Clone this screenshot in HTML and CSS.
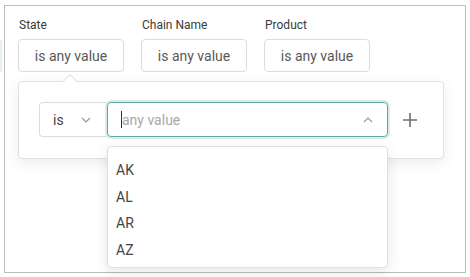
FILE: index.html
```html
<!DOCTYPE html>
<html lang="en">

<head>
    <meta charset="UTF-8">
    <title>Filters</title>
    <link rel="stylesheet" href="styles.css">
</head>

<body>
    <div class="edge"></div>
    <div class="frame">
        <div class="filters">
            <div class="filter">
                <label>State</label>
                <button class="filter-button">is any value</button>
            </div>
            <div class="filter">
                <label>Chain Name</label>
                <button class="filter-button">is any value</button>
            </div>
            <div class="filter">
                <label>Product</label>
                <button class="filter-button">is any value</button>
            </div>
        </div>

        <div class="popover">
            <div class="popover-arrow"></div>
            <div class="condition">
                <div class="operator">
                    <span>is</span>
                    <svg width="10" height="6" viewBox="0 0 10 6"><path d="M1 1l4 4 4-4" fill="none" stroke="#999" stroke-width="1.2"/></svg>
                </div>
                <div class="value-input">
                    <span class="caret"></span>
                    <span class="placeholder">any value</span>
                    <svg class="chevron" width="10" height="6" viewBox="0 0 10 6"><path d="M1 5l4-4 4 4" fill="none" stroke="#999" stroke-width="1.2"/></svg>
                </div>
                <svg class="add" width="14" height="14" viewBox="0 0 14 14"><path d="M7 0v14M0 7h14" stroke="#6b7079" stroke-width="1.6"/></svg>
            </div>
        </div>

        <ul class="options">
            <li>AK</li>
            <li>AL</li>
            <li>AR</li>
            <li>AZ</li>
        </ul>
    </div>
</body>

</html>
```

FILE: styles.css
```css
* {
    box-sizing: border-box;
    margin: 0;
    padding: 0;
}

body {
    font-family: Roboto, "Liberation Sans", sans-serif;
    background-color: #fff;
    width: 470px;
    height: 277px;
    overflow: hidden;
    position: relative;
}

.edge {
    position: absolute;
    left: 0;
    top: 40px;
    width: 2px;
    height: 32px;
    background-color: #e6f1f3;
}

.frame {
    position: relative;
    margin: 5px 0 0 4px;
    width: 462px;
    height: 268px;
    border: 1px solid #bdbdbd;
    padding: 12px 0 0 13px;
}

.filters {
    display: flex;
    gap: 17px;
}

.filter {
    display: flex;
    flex-direction: column;
    gap: 6px;
}

.filter label {
    font-size: 12px;
    color: #3a3a3a;
    padding-left: 1px;
    line-height: 15px;
}

.filter-button {
    width: 106px;
    height: 33px;
    border: 1px solid #dcdcdc;
    border-radius: 4px;
    background-color: #fff;
    font-family: inherit;
    font-size: 14px;
    color: #595959;
}

.popover {
    position: absolute;
    left: 13px;
    top: 75px;
    width: 426px;
    height: 78px;
    background-color: #fff;
    border: 1px solid #e2e2e2;
    border-radius: 4px;
    box-shadow: 0 4px 14px rgba(0, 0, 0, 0.08);
    padding: 20px 0 0 20px;
}

.popover-arrow {
    position: absolute;
    left: 46px;
    top: -6px;
    width: 10px;
    height: 10px;
    background-color: #fff;
    border-left: 1px solid #e2e2e2;
    border-top: 1px solid #e2e2e2;
    transform: rotate(45deg);
}

.condition {
    display: flex;
    align-items: center;
}

.operator {
    width: 68px;
    height: 35px;
    border: 1px solid #dcdcdc;
    border-right: none;
    border-radius: 4px 0 0 4px;
    display: flex;
    align-items: center;
    justify-content: space-between;
    padding: 0 16px 0 13px;
    font-size: 14px;
    color: #444;
}

.value-input {
    width: 281px;
    height: 35px;
    border: 1px solid #5ea69e;
    border-radius: 4px;
    box-shadow: 0 0 0 2px #d8ecea;
    display: flex;
    align-items: center;
    padding: 0 14px 0 13px;
    font-size: 14px;
}

.caret {
    width: 1px;
    height: 17px;
    background-color: #333;
}

.placeholder {
    color: #a8a8a8;
    flex: 1;
}

.add {
    margin-left: 15px;
}

.options {
    position: absolute;
    left: 102px;
    top: 140px;
    width: 281px;
    height: 122px;
    list-style: none;
    background-color: #fff;
    border: 1px solid #e0e0e0;
    border-radius: 4px;
    box-shadow: 0 4px 14px rgba(0, 0, 0, 0.1);
    padding-top: 10px;
}

.options li {
    font-size: 14px;
    color: #444;
    line-height: 26.5px;
    padding-left: 8px;
}
```
